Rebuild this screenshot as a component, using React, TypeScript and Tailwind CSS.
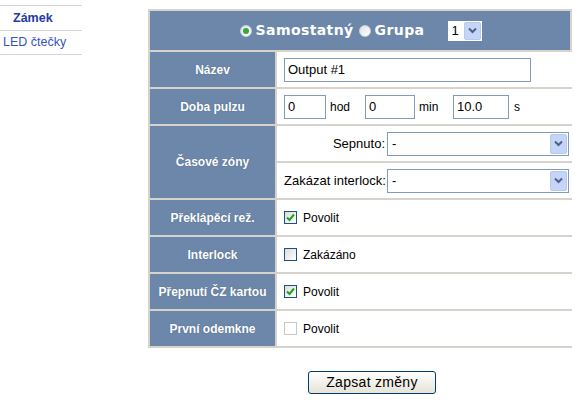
import React from 'react'

const font = { fontFamily: '"Liberation Sans", Arial, sans-serif' }

function Label({ children, className = '' }: { children: React.ReactNode; className?: string }) {
  return (
    <div
      className={`flex items-center justify-center bg-[#6c87a9] text-[12px] font-bold text-white ${className}`}
      style={{ textShadow: '0 0 1px rgba(40,60,90,0.5)' }}
    >
      {children}
    </div>
  )
}

function Cell({ children, className = '' }: { children: React.ReactNode; className?: string }) {
  return (
    <div className={`flex items-center whitespace-nowrap bg-white px-[7px] text-[12px] text-black ${className}`}>
      {children}
    </div>
  )
}

function TextInput({ value, width }: { value: string; width: string }) {
  return (
    <div className={`flex h-[24px] items-center border border-[#7f9db9] bg-white px-[3px] text-[13px] ${width}`}>
      {value}
    </div>
  )
}

function Arrow() {
  return (
    <div className="flex h-full w-[17px] items-center justify-center rounded-[2px] border border-[#b8c9ef] bg-[#c6d5f7]">
      <svg width="9" height="7" viewBox="0 0 9 7">
        <path d="M1 1.5 L4.5 5 L8 1.5" fill="none" stroke="#4d6185" strokeWidth="2" />
      </svg>
    </div>
  )
}

function Select({ value, width }: { value: string; width: string }) {
  return (
    <div className={`flex h-[24px] items-center border border-[#7f9db9] bg-white py-px pr-px text-[13px] ${width}`}>
      <span className="flex-1 pl-[4px]">{value}</span>
      <Arrow />
    </div>
  )
}

function Checkbox({ checked, disabled }: { checked?: boolean; disabled?: boolean }) {
  return (
    <span
      className={`mr-[6px] inline-flex h-[13px] w-[13px] items-center justify-center border bg-gradient-to-br to-white ${
        disabled ? 'border-[#cac8bb] from-white' : 'border-[#1c5180] from-[#dcdcd7]'
      }`}
    >
      {checked && (
        <svg width="9" height="9" viewBox="0 0 9 9">
          <path d="M1 4.5 L3.5 7 L8 1.5" fill="none" stroke="#21a121" strokeWidth="2" />
        </svg>
      )}
    </span>
  )
}

function Radio({ checked }: { checked?: boolean }) {
  return (
    <span className="mr-[4px] inline-flex h-[12px] w-[12px] items-center justify-center rounded-full border border-[#c9d2dc] bg-gradient-to-br from-[#dfe3e6] to-white">
      {checked && <span className="h-[6px] w-[6px] rounded-full bg-[#3aa63a]" />}
    </span>
  )
}

export default function App() {
  return (
    <div className="flex bg-white" style={font}>
      <nav className="mt-[5px] w-[82px] border-t border-[#d4d4d4] text-[12.5px]">
        <div className="flex h-[25px] items-center border-b border-[#d4d4d4] pl-[13px] font-bold text-[#1f3ba3]">
          Zámek
        </div>
        <div className="flex h-[24px] items-center border-b border-[#d4d4d4] pl-[3px] text-[#3553bd]">
          LED čtečky
        </div>
      </nav>

      <main className="ml-[66px] mt-[9px] w-[424px]">
        <div className="border-2 border-[#d6d3cc] bg-[#d6d3cc]">
          <div
            className="flex h-[39px] items-center justify-center bg-[#6c87a9] pl-[2px] text-[14px] font-bold tracking-[0.4px] text-white"
            style={{ fontFamily: '"DejaVu Sans", Verdana, sans-serif' }}
          >
            <Radio checked />
            <span>Samostatný</span>
            <span className="ml-[5px]" />
            <Radio />
            <span>Grupa</span>
            <div
              className="ml-[24px] flex h-[20px] w-[34px] items-center bg-white py-px pr-px text-[13px] font-normal tracking-normal text-black"
              style={font}
            >
              <span className="flex-1 pl-[3px]">1</span>
              <Arrow />
            </div>
          </div>

          <div className="mt-[2px] grid grid-cols-[125px_1fr] grid-rows-[35px_35px_35px_35px_35px_35px_35px_35px] gap-[2px]">
            <Label>Název</Label>
            <Cell>
              <TextInput value="Output #1" width="w-[247px]" />
            </Cell>

            <Label>Doba pulzu</Label>
            <Cell>
              <TextInput value="0" width="w-[42px]" />
              <span className="ml-[4px] w-[35px]">hod</span>
              <TextInput value="0" width="w-[50px]" />
              <span className="ml-[4px] w-[34px]">min</span>
              <TextInput value="10.0" width="w-[56px]" />
              <span className="ml-[5px]">s</span>
            </Cell>

            <Label className="row-span-2">Časové zóny</Label>
            <Cell className="px-[3px] text-[13px]">
              <span className="w-[103px] pr-[2px] text-right">Sepnuto:</span>
              <Select value="-" width="w-[182px]" />
            </Cell>
            <Cell className="px-[3px] text-[13px]">
              <span className="w-[103px] pr-[2px] text-right">Zakázat interlock:</span>
              <Select value="-" width="w-[182px]" />
            </Cell>

            <Label>Překlápěcí rež.</Label>
            <Cell>
              <Checkbox checked />
              Povolit
            </Cell>

            <Label>Interlock</Label>
            <Cell>
              <Checkbox />
              Zakázáno
            </Cell>

            <Label>Přepnutí ČZ kartou</Label>
            <Cell>
              <Checkbox checked />
              Povolit
            </Cell>

            <Label>První odemkne</Label>
            <Cell>
              <Checkbox disabled />
              Povolit
            </Cell>
          </div>
        </div>

        <div className="mt-[23px] flex justify-center pl-[24px]">
          <button className="h-[23px] w-[128px] rounded-[3px] border border-[#003c74] bg-gradient-to-b from-white to-[#e6e3d6] text-[14px] tracking-[0.3px] text-black">
            Zapsat změny
          </button>
        </div>
      </main>
    </div>
  )
}
